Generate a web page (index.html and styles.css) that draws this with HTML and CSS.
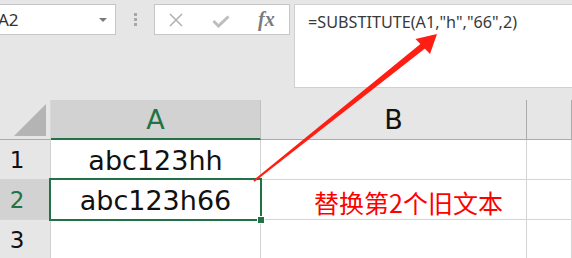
FILE: index.html
```html
<!DOCTYPE html>
<html lang="zh-CN">
<head>
  <meta charset="UTF-8">
  <title>SUBSTITUTE</title>
  <link rel="stylesheet" href="styles.css">
</head>
<body>
  <div class="formula-bar">
    <div class="name-box">
      <span class="name">A2</span>
      <span class="caret"></span>
    </div>
    <div class="grip"><i></i><i></i><i></i></div>
    <div class="fx-box">
      <svg class="icon-cancel" width="16" height="14" viewBox="0 0 16 14">
        <path d="M2 1 L14 13 M14 1 L2 13" stroke="#b3b3b3" stroke-width="1.6" fill="none"/>
      </svg>
      <svg class="icon-enter" width="18" height="13" viewBox="0 0 18 13">
        <path d="M1.5 6 L6.5 11 L16.5 1.5" stroke="#bdbdbd" stroke-width="3" fill="none"/>
      </svg>
      <span class="fx">fx</span>
    </div>
    <div class="formula-input">=SUBSTITUTE(A1,"h","66",2)</div>
  </div>

  <div class="sheet">
    <div class="corner">
      <svg width="34" height="34" viewBox="0 0 34 34"><polygon points="33,1 33,33 1,33" fill="#b4b4b4"/></svg>
    </div>
    <div class="col-head active">A</div>
    <div class="col-head">B</div>
    <div class="col-head"></div>

    <div class="row-head">1</div>
    <div class="cell">abc123hh</div>
    <div class="cell"></div>
    <div class="cell"></div>

    <div class="row-head active">2</div>
    <div class="cell">abc123h66</div>
    <div class="cell note">替换第2个旧文本</div>
    <div class="cell"></div>

    <div class="row-head">3</div>
    <div class="cell"></div>
    <div class="cell"></div>
    <div class="cell"></div>

    <div class="selection"><span class="handle"></span></div>
  </div>

  <svg class="arrow" width="572" height="258" viewBox="0 0 572 258">
    <polygon points="254.6,181.7 253.4,180.3 421.0,43.6 425.0,48.4" fill="#fe1e14"/>
    <polygon points="437,34 415.5,39 430,54" fill="#fe1e14"/>
  </svg>
</body>
</html>
```

FILE: styles.css
```css
body {
  margin: 0;
  width: 572px;
  height: 258px;
  overflow: hidden;
  background: #e6e6e6;
  font-family: "DejaVu Sans", "Noto Sans CJK SC", sans-serif;
  position: relative;
}
.formula-bar {
  display: flex;
  align-items: flex-start;
  height: 100px;
  padding-top: 4px;
  box-sizing: border-box;
}
.name-box {
  margin-left: -13px;
  width: 129px;
  height: 31px;
  box-sizing: border-box;
  background: #fff;
  border: 1px solid #c6c6c6;
  display: flex;
  align-items: center;
  justify-content: space-between;
  padding: 0 8px 0 10px;
}
.name-box .name {
  font-family: "Noto Sans", sans-serif;
  font-size: 17px;
  color: #333;
}
.name-box .caret {
  width: 0;
  height: 0;
  border-left: 4px solid transparent;
  border-right: 4px solid transparent;
  border-top: 4px solid #7a7a7a;
  margin-top: 1px;
}
.grip {
  width: 38px;
  display: flex;
  flex-direction: column;
  align-items: center;
  gap: 2px;
  padding-top: 9px;
}
.grip i {
  width: 3px;
  height: 3px;
  background: #a8a8a8;
}
.fx-box {
  width: 136px;
  height: 31px;
  box-sizing: border-box;
  background: #fff;
  border: 1px solid #c6c6c6;
  display: flex;
  align-items: center;
  padding-left: 13px;
}
.icon-cancel {
  margin-top: 1px;
}
.icon-enter {
  margin-left: 28px;
  margin-top: 3px;
}
.fx {
  margin-left: 28px;
  font-family: "Liberation Serif", serif;
  font-style: italic;
  font-weight: bold;
  font-size: 20px;
  color: #7b7b7b;
}
.formula-input {
  margin-left: 4px;
  flex: 1;
  height: 84px;
  box-sizing: border-box;
  background: #fff;
  border: 1px solid #d0d0d0;
  border-right: none;
  padding: 6px 0 0 13px;
  font-family: "Noto Sans", sans-serif;
  font-size: 16.2px;
  color: #3a3a3a;
  white-space: nowrap;
}
.sheet {
  display: grid;
  grid-template-columns: 51px 210px 266px 1fr;
  grid-auto-rows: 40px;
  position: relative;
}
.corner {
  background: #e6e6e6;
  border-right: 1px solid #d8d8d8;
  border-bottom: 1px solid #ababab;
  display: flex;
  justify-content: flex-end;
  align-items: flex-end;
  padding: 0 3px 2px 0;
}
.corner svg {
  display: block;
}
.col-head {
  background: #e6e6e6;
  border-right: 1px solid #ababab;
  border-bottom: 1px solid #ababab;
  text-align: center;
  font-size: 27px;
  line-height: 40px;
  color: #111;
}
.col-head.active {
  background: #d2d2d2;
  color: #217346;
  border-right-color: #c0c0c0;
  border-bottom: 2px solid #217346;
  line-height: 39px;
}
.row-head {
  background: #e6e6e6;
  border-right: 1px solid #d0d0d0;
  border-bottom: 1px solid #d4d4d4;
  text-align: center;
  padding-right: 16px;
  font-size: 23px;
  line-height: 40px;
  color: #111;
}
.row-head.active {
  background: #d2d2d2;
  color: #217346;
}
.cell {
  background: #fff;
  border-right: 1px solid #d4d4d4;
  border-bottom: 1px solid #d4d4d4;
  text-align: center;
  font-size: 27px;
  line-height: 40px;
  padding-top: 1px;
  color: #111;
  white-space: nowrap;
  overflow: hidden;
}
.cell.note {
  font-family: "Noto Sans CJK SC", sans-serif;
  font-size: 25px;
  color: #ff0000;
  text-align: left;
  padding: 4px 0 0 53px;
  line-height: 36px;
}
.selection {
  position: absolute;
  left: 49px;
  top: 78px;
  width: 213px;
  height: 43px;
  box-sizing: border-box;
  border: 2px solid #217346;
}
.selection .handle {
  position: absolute;
  right: -5px;
  bottom: -5px;
  width: 6px;
  height: 6px;
  background: #217346;
  border: 1px solid #fff;
}
.arrow {
  position: absolute;
  left: 0;
  top: 0;
}
```
